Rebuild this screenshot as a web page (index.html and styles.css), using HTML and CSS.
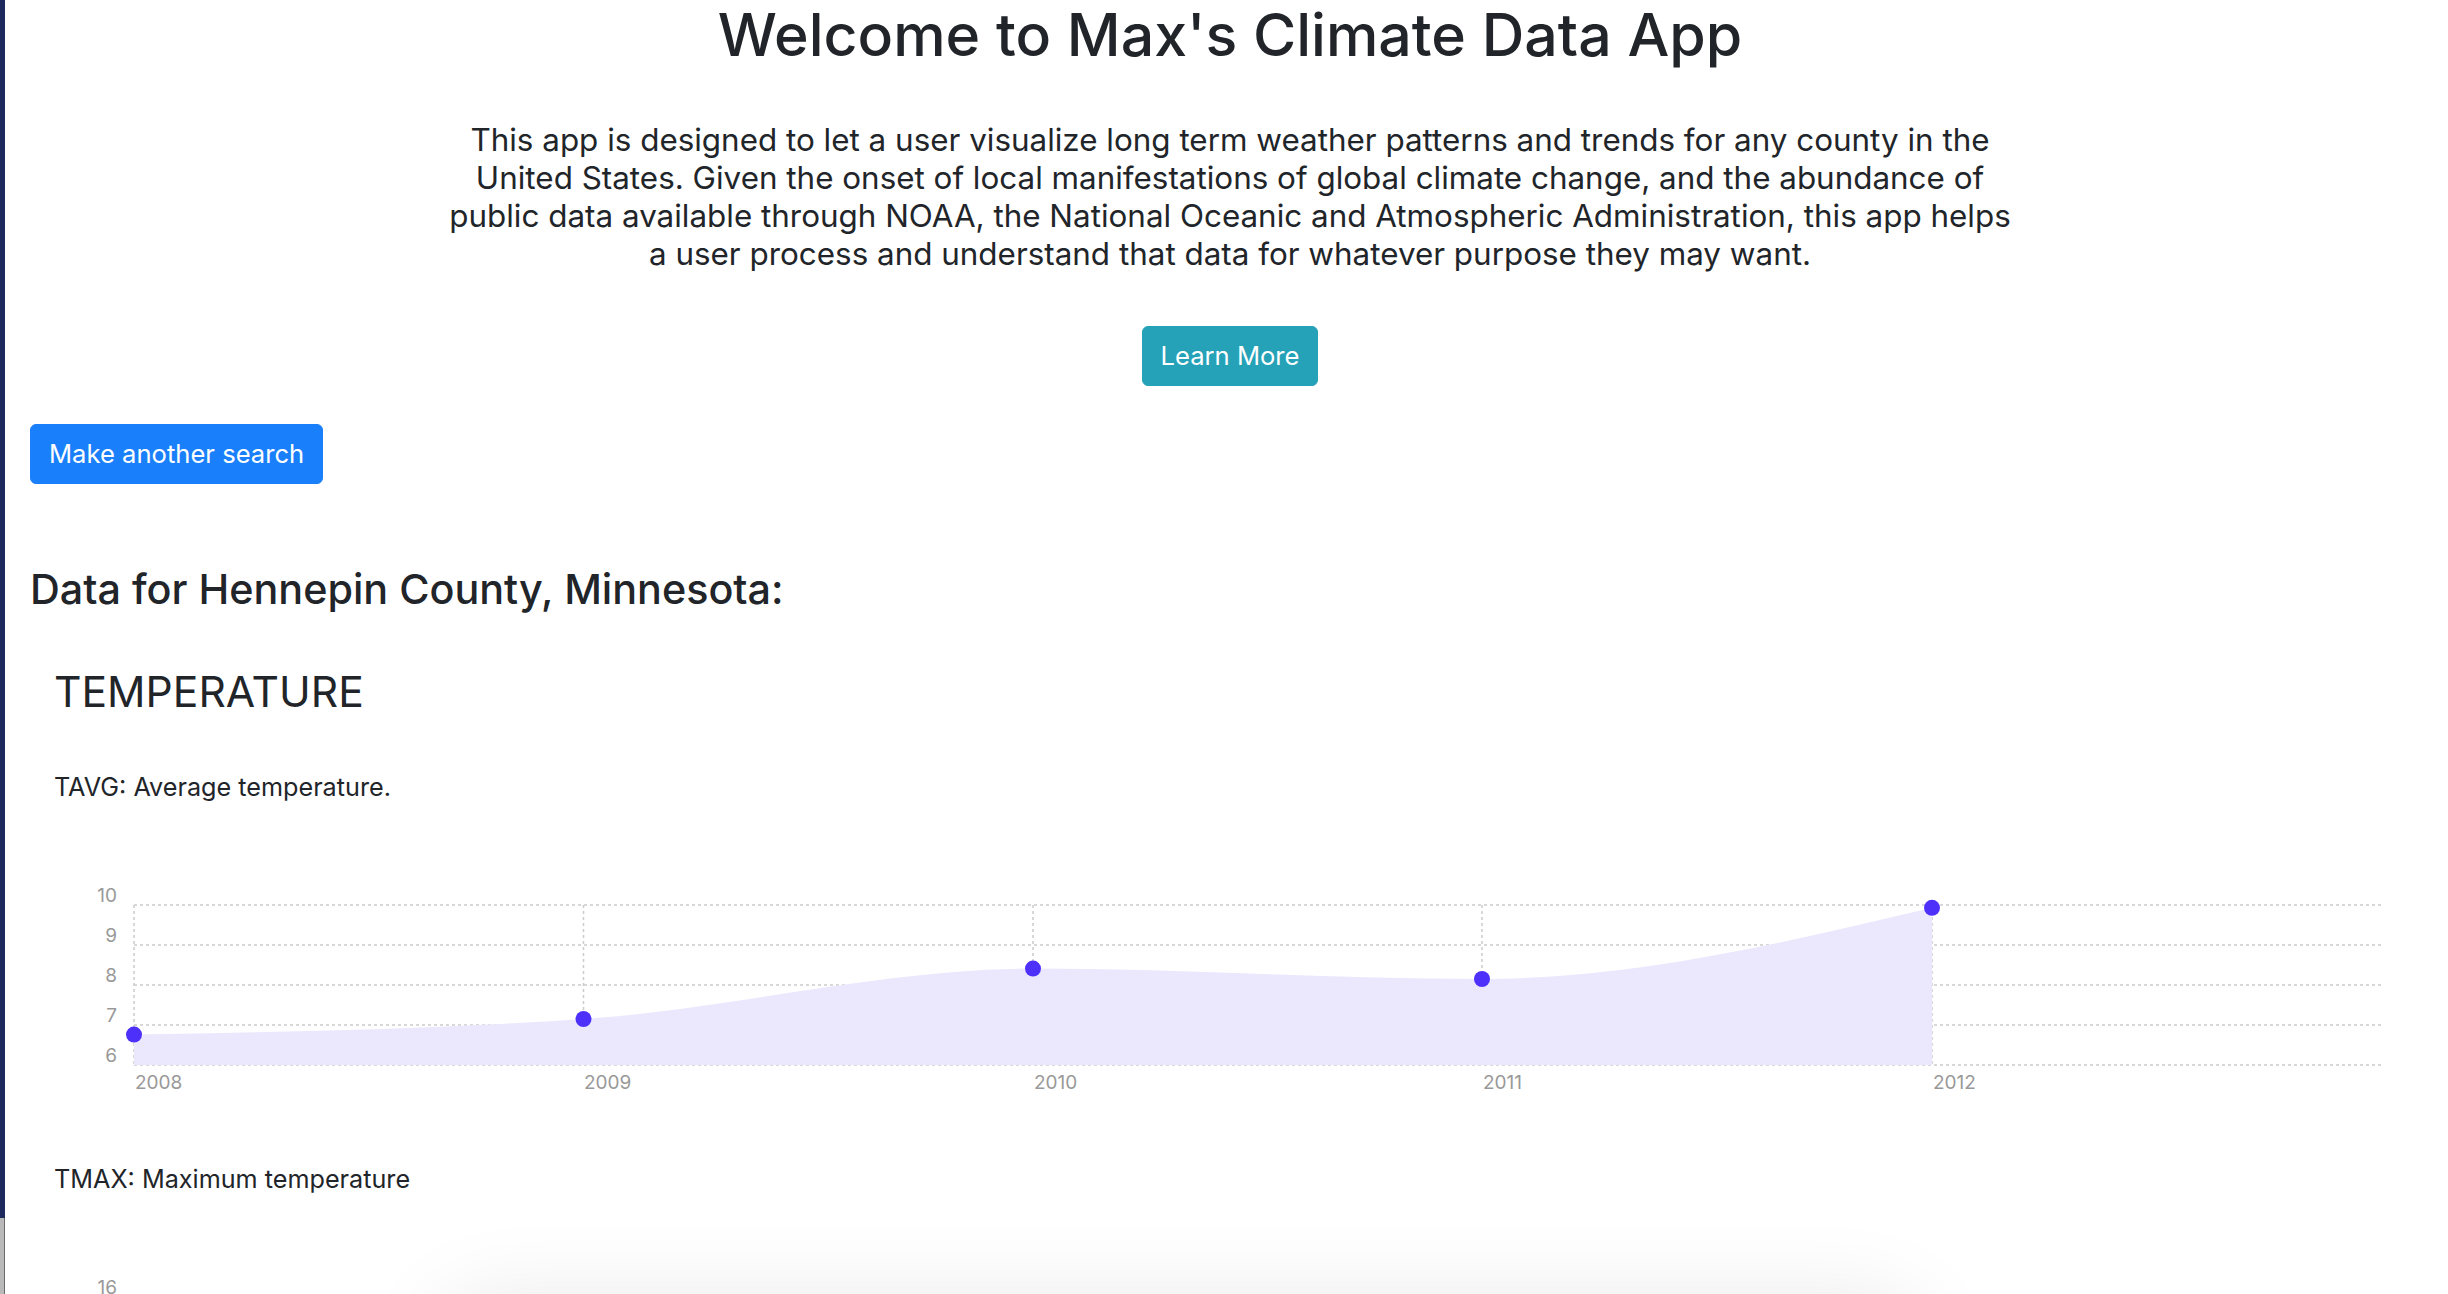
FILE: index.html
```html
<!DOCTYPE html>
<html lang="en">
<head>
<meta charset="utf-8">
<title>Max's Climate Data App</title>
<link rel="stylesheet" href="styles.css">
</head>
<body>
<div class="edge"><div class="edge-top"></div><div class="edge-bottom"></div></div>
<main class="page">
  <header class="hero">
    <h1 class="hero-title">Welcome to Max's Climate Data App</h1>
    <p class="hero-text">This app is designed to let a user visualize long term weather patterns and trends for any county in the<br>United States. Given the onset of local manifestations of global climate change, and the abundance of<br>public data available through NOAA, the National Oceanic and Atmospheric Administration, this app helps<br>a user process and understand that data for whatever purpose they may want.</p>
    <div class="hero-actions"><button class="btn btn-info">Learn More</button></div>
  </header>
  <div class="search-row"><button class="btn btn-primary">Make another search</button></div>
  <h3 class="county-title">Data for Hennepin County, Minnesota:</h3>
  <section class="category">
    <h3 class="category-title">TEMPERATURE</h3>
    <div class="metric">
      <p class="metric-label">TAVG: Average temperature.</p>
      <svg class="chart" width="2340" height="250" viewBox="54 850 2340 250">
        <g class="grid">
          <line x1="134" y1="906" x2="2382" y2="906"/>
          <line x1="134" y1="946" x2="2382" y2="946"/>
          <line x1="134" y1="986" x2="2382" y2="986"/>
          <line x1="134" y1="1026" x2="2382" y2="1026"/>
          <line x1="134" y1="1066" x2="2382" y2="1066"/>
          <line x1="134" y1="906" x2="134" y2="1066"/>
          <line x1="583.5" y1="906" x2="583.5" y2="1066"/>
          <line x1="1033" y1="906" x2="1033" y2="1066"/>
          <line x1="1482" y1="906" x2="1482" y2="1066"/>
          <line x1="1932" y1="906" x2="1932" y2="1066"/>
        </g>
        <path class="area" d="M134,1066 L134,1035.6 C283.8,1033 433.7,1030.4 583.5,1020 C733.3,1009.6 883.2,969.6 1033,969.6 C1182.7,969.6 1332.3,980 1482,980 C1632,980 1782,944.4 1932,908.8 L1932,1066 Z"/>
        <g class="ylabels">
          <text x="117" y="902.5">10</text>
          <text x="117" y="942.5">9</text>
          <text x="117" y="982.5">8</text>
          <text x="117" y="1022.5">7</text>
          <text x="117" y="1062.5">6</text>
        </g>
        <g class="xlabels">
          <text x="135" y="1090">2008</text>
          <text x="584" y="1090">2009</text>
          <text x="1034" y="1090">2010</text>
          <text x="1483" y="1090">2011</text>
          <text x="1933" y="1090">2012</text>
        </g>
        <g class="dots">
          <circle cx="134" cy="1035.6" r="8"/>
          <circle cx="583.5" cy="1020" r="8"/>
          <circle cx="1033" cy="969.6" r="8"/>
          <circle cx="1482" cy="980" r="8"/>
          <circle cx="1932" cy="908.8" r="8"/>
        </g>
      </svg>
    </div>
    <div class="metric">
      <p class="metric-label">TMAX: Maximum temperature</p>
      <svg class="chart" width="2340" height="250" viewBox="54 850 2340 250">
        <g class="grid">
          <line x1="134" y1="906" x2="2382" y2="906"/>
          <line x1="134" y1="946" x2="2382" y2="946"/>
          <line x1="134" y1="986" x2="2382" y2="986"/>
          <line x1="134" y1="1026" x2="2382" y2="1026"/>
          <line x1="134" y1="1066" x2="2382" y2="1066"/>
        </g>
        <g class="ylabels">
          <text x="117" y="902.5">16</text>
          <text x="117" y="942.5">14</text>
          <text x="117" y="982.5">12</text>
          <text x="117" y="1022.5">10</text>
          <text x="117" y="1062.5">8</text>
        </g>
      </svg>
    </div>
  </section>
</main>
<div class="dock-shadow"></div>
</body>
</html>
```
FILE: styles.css
```css
html, body {
  margin: 0;
  padding: 0;
  overflow: hidden;
  background: #ffffff;
}
body {
  font-family: "Inter", "Liberation Sans", sans-serif;
  color: #212529;
  height: 1294px;
}
.edge {
  position: fixed;
  left: 0;
  top: 0;
  width: 5px;
  height: 1294px;
  display: flex;
  flex-direction: column;
  z-index: 5;
}
.edge-top {
  height: 1218px;
  background: #1e2a5e;
}
.edge-bottom {
  flex: 1;
  background: #b9b9b9;
  border-right: 1px solid #6b6b6b;
}
.page {
  padding-left: 30px;
}
.hero {
  text-align: center;
  padding-left: 12px;
  margin-left: -30px;
}
.hero-title {
  font-size: 59px;
  font-weight: 500;
  line-height: 70.8px;
  margin: 0;
}
.hero-text {
  max-width: 1700px;
  margin: 50px auto 0;
  font-size: 31.4px;
  line-height: 38px;
  white-space: nowrap;
}
.hero-actions {
  margin-top: 53.5px;
}
.btn {
  font-family: inherit;
  font-size: 25.6px;
  line-height: 38px;
  padding: 10px 18px;
  border: 1px solid transparent;
  border-radius: 6px;
  color: #ffffff;
  cursor: pointer;
}
.btn-info {
  background: #25a2b8;
  border-color: #25a2b8;
}
.btn-primary {
  background: #1a7ffb;
  border-color: #1a7ffb;
}
.search-row {
  margin-top: 38px;
}
.county-title {
  font-size: 41.3px;
  font-weight: 500;
  line-height: 50.4px;
  margin: 80px 0 0;
}
.category {
  padding-left: 24px;
}
.category-title {
  font-size: 42.6px;
  font-weight: 400;
  line-height: 50.4px;
  margin: 52px 0 0;
}
.metric-label {
  font-size: 25.2px;
  line-height: 37.5px;
  margin: 51.5px 0 43px;
}
.metric + .metric .metric-label {
  margin-top: 61.5px;
}
.chart {
  display: block;
  overflow: visible;
}
.grid line {
  stroke: #cccccc;
  stroke-width: 1.5;
  stroke-dasharray: 3 3;
}
.area {
  fill: #ebe8fd;
  stroke: none;
}
.dots circle {
  fill: #4d31fa;
}
.ylabels text {
  font-family: "Inter", "Liberation Sans", sans-serif;
  font-size: 19px;
  fill: #999999;
  text-anchor: end;
}
.xlabels text {
  font-family: "Inter", "Liberation Sans", sans-serif;
  font-size: 19px;
  fill: #999999;
  text-anchor: start;
}
.dock-shadow {
  position: fixed;
  left: 450px;
  width: 1460px;
  top: 1320px;
  height: 100px;
  border-radius: 40px;
  box-shadow: 0 -6px 90px 10px rgba(0, 0, 0, 0.10);
}
```
